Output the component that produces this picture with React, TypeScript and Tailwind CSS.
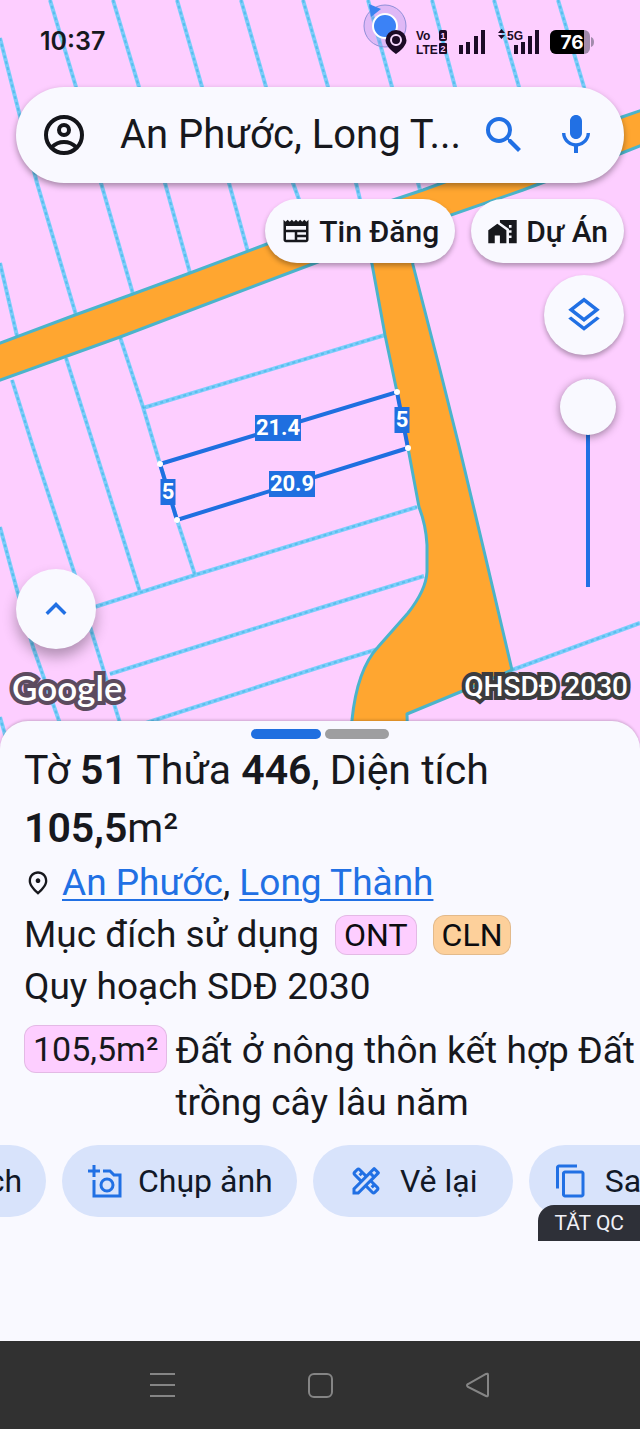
import { ReactNode, useState } from "react";
import {
  MdContentCopy,
  MdKeyboardArrowUp,
  MdMapsHomeWork,
  MdMic,
  MdOutlineDesignServices,
  MdOutlineLayers,
  MdOutlineNewspaper,
  MdOutlinePlace,
  MdSearch,
} from "react-icons/md";

const parcelLines = [
  "0,38 37,183 76,315",
  "50,0 76,87 101,183 133,294",
  "113,0 139,87 165,183 190,273",
  "177,0 202,87 229,183 248,252",
  "241,0 266,87 293,183 310,230",
  "303,0 328,87 356,183 362,208",
  "368,0 392,87 420,190",
  "432,0 455,87 475,160",
  "494,0 519,87 530,130",
  "558,0 584,87 588,110",
  "0,263 17,336",
  "12,380 33,447 75,575 92,633 129,752",
  "66,358 92,440 140,592",
  "120,337 143,407 160,464 177,520 195,575",
  "143,408 385,335",
  "0,527 17,590 33,647 70,752",
  "0,717 10,752",
  "60,618 195,575 417,507",
  "110,674 320,608 424,576",
  "60,752 155,720 320,667 378,649",
  "512,670 640,623",
];

const sizes = [
  { x: 278, y: 428, w: 46, value: "21.4" },
  { x: 402, y: 420, w: 15, value: "5" },
  { x: 168, y: 492, w: 15, value: "5" },
  { x: 292, y: 484, w: 46, value: "20.9" },
];

const corners = [
  [160, 464],
  [397, 392],
  [408, 448],
  [177, 520],
];

function ParcelMap() {
  return (
    <svg
      viewBox="0 0 640 752"
      preserveAspectRatio="xMidYMin slice"
      className="absolute inset-0 h-full w-full"
    >
      <rect width="640" height="752" fill="#fdceff" />
      <g fill="none" strokeLinejoin="round">
        <g stroke="#7ccdfb" strokeWidth="4">
          {parcelLines.map((points) => (
            <polyline key={points} points={points} />
          ))}
        </g>
        <g stroke="#41b4e2" strokeWidth="2" strokeDasharray="3 3" strokeOpacity="0.6">
          {parcelLines.map((points) => (
            <polyline key={points} points={points} />
          ))}
        </g>
      </g>

      {/* Roads */}
      <path
        d="M-5 345L75 315L133 294L190 273L267 244L345 216L423 190L622 117L645 109V144L622 153L523 190L408 230L413 265L440 370L460 450L485 555L512 670L465 690L407 714L408 752H347L352 720C356 680 366 660 378 647L408 613Q426 590 427 572V545Q426 525 419 507L408 448L397 392L385 335L372 264L366 244L310 265L120 337L-5 382Z"
        fill="#ffa630"
        stroke="#4bb4cb"
        strokeWidth="3"
        strokeLinejoin="round"
      />

      {/* Selected parcel */}
      <polygon
        points="160,464 397,392 408,448 177,520"
        fill="none"
        stroke="#1f6fe0"
        strokeWidth="4"
      />
      {corners.map(([x, y]) => (
        <circle key={x} cx={x} cy={y} r="3" fill="#fff" />
      ))}
      {sizes.map(({ x, y, w, value }) => (
        <g key={`${x}-${y}`}>
          <rect x={x - w / 2} y={y - 13} width={w} height="26" fill="#1f6fe0" />
          <text
            x={x}
            y={y + 7}
            textAnchor="middle"
            fill="#fff"
            fontSize="22"
            fontWeight="700"
            fontFamily="Roboto, sans-serif"
          >
            {value}
          </text>
        </g>
      ))}

      {/* Current location */}
      <circle cx="385" cy="26" r="21" fill="#9a86e0" fillOpacity="0.3" stroke="#8f8fd8" />
      <path d="M369 4L381 9L371 17Z" fill="#3b82f0" />
      <circle cx="385" cy="26" r="12" fill="#3b82f6" stroke="#fff" strokeWidth="2" />
    </svg>
  );
}

function StatusIcons() {
  return (
    <svg viewBox="0 0 210 36" className="h-9 w-[210px]" fill="#1c0b26">
      <path
        fillRule="evenodd"
        d="M12 6a10.500 10.500 0 0 0-10.500 10.500C1.500 23 12 30 12 30s10.500-7 10.500-13.500A10.500 10.500 0 0 0 12 6Zm0 5.500a5 5 0 1 1 0 10 5 5 0 0 1 0-10Z"
      />
      <path d="M12 11a5 5 0 1 1 0 10a5 5 0 1 1 0-10Z" fill="none" stroke="#f5d9fb" strokeWidth="2" />
      <circle cx="12" cy="16" r="4" />
      <g fontFamily="'Liberation Sans', sans-serif" fontWeight="700" fontSize="12">
        <text x="32" y="16">Vo</text>
        <text x="32" y="30">LTE</text>
        <rect x="55" y="6" width="8" height="11" rx="2" />
        <rect x="55" y="19" width="8" height="11" rx="1" />
        <g fill="#fdceff" fontSize="9" textAnchor="middle">
          <text x="59" y="15">1</text>
          <text x="59" y="28">2</text>
        </g>
        <text x="123" y="16">5G</text>
      </g>
      <path d="M75 21h4v9h-4zM82 18h4v12h-4zM90 12h4v18h-4zM97 6h4v24h-4z" />
      <path d="M130 21h4v9h-4zM137 18h4v12h-4zM144 12h4v18h-4zM151 6h4v24h-4zM114 9l3.500-4 3.500 4zM114 11h7l-3.500 4z" />
      <rect x="166" y="6" width="40" height="24" rx="6" fill="#a28bac" />
      <path d="M172 6h28v24h-28a6 6 0 0 1-6-6V12a6 6 0 0 1 6-6Z" fill="#000" />
      <path d="M207 13q3 1 3 5t-3 5z" fill="#a28bac" />
      <text
        x="188"
        y="25"
        textAnchor="middle"
        fill="#fff"
        fontFamily="Inter, sans-serif"
        fontWeight="700"
        fontSize="19"
      >
        76
      </text>
    </svg>
  );
}

function AccountIcon() {
  return (
    <svg viewBox="0 0 40 40" className="size-10" fill="none" stroke="#14151a" strokeWidth="4">
      <circle cx="20" cy="20" r="18" />
      <circle cx="20" cy="15" r="5" />
      <path d="M8 32q5-5 12-5t12 5" />
    </svg>
  );
}

function AddPhotoIcon() {
  return (
    <svg viewBox="0 0 36 36" className="size-9" fill="none" stroke="currentColor" strokeWidth="3">
      <path d="M8 2v12M2 8h12M17 8h7l4 4h6v21H8V17" />
      <circle cx="21" cy="22" r="6" />
    </svg>
  );
}

function MapChip({ icon, label }: { icon: ReactNode; label: string }) {
  return (
    <button className="flex h-16 items-center gap-2 rounded-full bg-[#f9f9ff] px-4 text-[30px] font-medium shadow-[0_3px_5px_rgba(0,0,0,0.3)]">
      {icon}
      {label}
    </button>
  );
}

function Badge({ color, children }: { color: string; children: ReactNode }) {
  return (
    <span
      className={`rounded-xl border border-black/10 px-2 text-[32px] leading-[38px] text-[#0c0c10] ${color}`}
    >
      {children}
    </span>
  );
}

function ActionButton({ icon, label }: { icon: ReactNode; label: string }) {
  return (
    <button className="flex h-[72px] min-w-[200px] shrink-0 items-center justify-center gap-4 rounded-full bg-[#d8e3fb] px-6 text-[32px] text-[#111827]">
      <span className="text-[36px] text-[#2170e4]">{icon}</span>
      {label}
    </button>
  );
}

export default function App() {
  const [opacity, setOpacity] = useState(0);

  return (
    <div className="flex min-h-screen flex-col overflow-hidden bg-[#f9f9ff] font-[Roboto,sans-serif] text-[#17181d]">
      <section className="relative flex min-h-[752px] flex-col">
        <ParcelMap />

        <div className="relative flex h-[87px] items-center justify-between pr-[46px] pb-1 pl-10">
          <time className="font-[Inter,sans-serif] text-[25px] font-semibold">10:37</time>
          <StatusIcons />
        </div>

        <form
          role="search"
          onSubmit={(e) => e.preventDefault()}
          className="relative mx-4 flex h-24 items-center rounded-full bg-[#f9f9ff] pr-6 pl-7 shadow-[0_3px_6px_rgba(0,0,0,0.35)]"
        >
          <button type="button" aria-label="Tài khoản">
            <AccountIcon />
          </button>
          <input
            aria-label="Tìm kiếm"
            readOnly
            value="An Phước, Long T..."
            className="mr-2 ml-9 min-w-0 flex-1 text-[40px] outline-none"
          />
          <button aria-label="Tìm" className="text-[#2170e4]">
            <MdSearch size={48} />
          </button>
          <button type="button" aria-label="Giọng nói" className="ml-6 text-[#2170e4]">
            <MdMic size={48} />
          </button>
        </form>

        <div className="relative mt-4 flex justify-end gap-4 pr-4">
          <MapChip icon={<MdOutlineNewspaper size={30} />} label="Tin Đăng" />
          <MapChip icon={<MdMapsHomeWork size={31} />} label="Dự Án" />
        </div>

        <div className="relative mt-3 flex h-[374px] justify-between px-4">
          <button
            aria-label="Mở rộng"
            className="flex size-20 items-center justify-center self-end rounded-full bg-[#f9f9ff] text-[#2170e4] shadow-[0_8px_14px_rgba(0,0,0,0.3)]"
          >
            <MdKeyboardArrowUp size={42} />
          </button>
          <div className="flex flex-col items-center">
            <button
              aria-label="Lớp bản đồ"
              className="flex size-20 items-center justify-center rounded-full bg-[#f9f9ff] text-[#2170e4] shadow-[0_3px_5px_rgba(0,0,0,0.3)]"
            >
              <MdOutlineLayers size={42} />
            </button>
            <input
              type="range"
              aria-label="Độ mờ"
              value={opacity}
              onChange={(e) => setOpacity(Number(e.target.value))}
              className="mt-6 ml-2 h-[208px] w-14 appearance-none bg-[linear-gradient(#2170e4,#2170e4)] bg-[length:4px_100%] bg-center bg-no-repeat [writing-mode:vertical-lr] [&::-webkit-slider-thumb]:size-14 [&::-webkit-slider-thumb]:appearance-none [&::-webkit-slider-thumb]:rounded-full [&::-webkit-slider-thumb]:bg-[#f9f9ff] [&::-webkit-slider-thumb]:shadow-[0_2px_8px_rgba(0,0,0,0.4)]"
            />
          </div>
        </div>

        <div className="relative mt-4 flex items-center justify-between px-3 leading-[44px]">
          <span className="font-[Lato,sans-serif] text-[35px] font-semibold text-white [-webkit-text-stroke:8px_#5c4b5f] [paint-order:stroke_fill]">
            Google
          </span>
          <span className="text-[28px] font-medium text-white [-webkit-text-stroke:8px_#3c3c3e] [paint-order:stroke_fill]">
            QHSDĐ 2030
          </span>
        </div>
      </section>

      <main className="relative -mt-[31px] flex flex-1 flex-col rounded-t-[28px] bg-[#f9f9ff] pt-2 shadow-[0_-1px_3px_rgba(0,0,0,0.2)]">
        <div className="mb-[2px] flex justify-center gap-1">
          <span className="h-[10px] w-[70px] rounded-full bg-[#1f6fe0]" />
          <span className="h-[10px] w-16 rounded-full bg-[#9e9ea0]" />
        </div>

        <div className="pl-6 text-[37px] leading-[52px]">
          <h1 className="text-[41px] leading-[58px]">
            Tờ <b className="font-semibold">51</b> Thửa <b className="font-semibold">446</b>, Diện tích
            <br />
            <b className="font-semibold">105,5</b>m²
          </h1>
          <p className="flex items-center">
            <MdOutlinePlace size={28} className="mr-[10px]" />
            <span>
              <a href="#an-phuoc" className="text-[#2170e4] underline decoration-2 underline-offset-4">
                An Phước
              </a>
              ,{" "}
              <a href="#long-thanh" className="text-[#2170e4] underline decoration-2 underline-offset-4">
                Long Thành
              </a>
            </span>
          </p>
          <p className="flex items-center gap-4">
            Mục đích sử dụng
            <Badge color="bg-[#fdceff]">ONT</Badge>
            <Badge color="bg-[#fdd09b]">CLN</Badge>
          </p>
          <p>Quy hoạch SDĐ 2030</p>
          <div className="mt-3 flex items-start gap-2">
            <span className="rounded-xl border border-black/10 bg-[#fdceff] px-2 text-[34px] leading-[46px]">
              105,5m²
            </span>
            <p className="whitespace-nowrap">
              Đất ở nông thôn kết hợp Đất
              <br />
              trồng cây lâu năm
            </p>
          </div>
        </div>

        <div className="relative mt-4">
          <div className="flex gap-4 overflow-hidden">
            <button className="flex h-[72px] w-[46px] shrink-0 items-center justify-end rounded-r-full bg-[#d8e3fb] pr-6 text-[32px] text-[#111827]">
              ch
            </button>
            <ActionButton icon={<AddPhotoIcon />} label="Chụp ảnh" />
            <ActionButton icon={<MdOutlineDesignServices />} label="Vẻ lại" />
            <button className="flex h-[72px] shrink-0 items-center gap-4 rounded-l-full bg-[#d8e3fb] pl-6 text-[32px] text-[#111827]">
              <MdContentCopy size={36} className="text-[#2170e4]" />
              Sa
            </button>
          </div>
          <button className="absolute top-[60px] right-0 h-9 rounded-tl-2xl bg-[#2e3038] px-4 text-[21px] leading-9 text-[#f0f0f7]">
            TẮT QC
          </button>
        </div>
      </main>

      <nav className="flex h-[88px] items-center justify-center gap-[130px] bg-[#313131]">
        <button aria-label="Ứng dụng gần đây">
          <svg viewBox="0 0 28 28" className="size-7" stroke="#858585" strokeWidth="2">
            <path d="M2 3h25M2 14h25M2 25h25" />
          </svg>
        </button>
        <button aria-label="Màn hình chính">
          <svg viewBox="0 0 28 28" className="size-7" fill="none" stroke="#858585" strokeWidth="2">
            <rect x="3" y="3" width="23" height="23" rx="5" />
          </svg>
        </button>
        <button aria-label="Quay lại">
          <svg viewBox="0 0 28 28" className="size-7" fill="none" stroke="#858585" strokeWidth="2">
            <path d="M24 4v20q0 2-2 1L4 16q-2-2 0-3L22 3q2-1 2 1Z" />
          </svg>
        </button>
      </nav>
    </div>
  );
}
